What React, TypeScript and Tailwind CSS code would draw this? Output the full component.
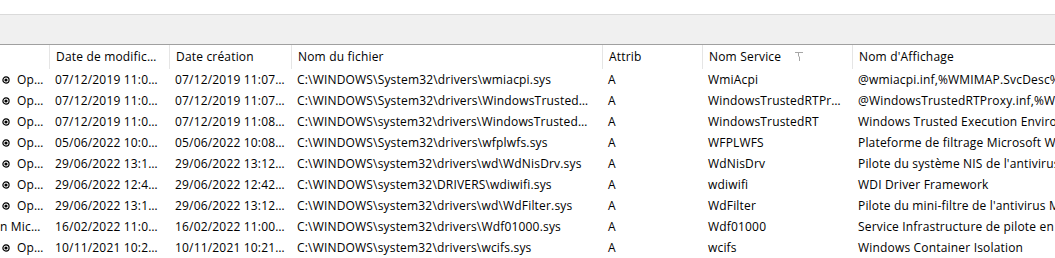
import React from "react";

type Row = {
  icon: boolean;
  first: string;
  modified: string;
  created: string;
  file: string;
  attrib: string;
  service: string;
  display: string;
};

const rows: Row[] = [
  { icon: true, first: "Op…", modified: "07/12/2019 11:0…", created: "07/12/2019 11:07…", file: "C:\\WINDOWS\\System32\\drivers\\wmiacpi.sys", attrib: "A", service: "WmiAcpi", display: "@wmiacpi.inf,%WMIMAP.SvcDesc%;Microsoft Windows Management Interface for ACPI" },
  { icon: true, first: "Op…", modified: "07/12/2019 11:0…", created: "07/12/2019 11:07…", file: "C:\\WINDOWS\\System32\\drivers\\WindowsTrusted…", attrib: "A", service: "WindowsTrustedRTPr…", display: "@WindowsTrustedRTProxy.inf,%WindowsTrustedRTProxy.SvcDesc%" },
  { icon: true, first: "Op…", modified: "07/12/2019 11:0…", created: "07/12/2019 11:08…", file: "C:\\WINDOWS\\system32\\drivers\\WindowsTrusted…", attrib: "A", service: "WindowsTrustedRT", display: "Windows Trusted Execution Environment Class Extension" },
  { icon: true, first: "Op…", modified: "05/06/2022 10:0…", created: "05/06/2022 10:08…", file: "C:\\WINDOWS\\System32\\drivers\\wfplwfs.sys", attrib: "A", service: "WFPLWFS", display: "Plateforme de filtrage Microsoft Windows" },
  { icon: true, first: "Op…", modified: "29/06/2022 13:1…", created: "29/06/2022 13:12…", file: "C:\\WINDOWS\\system32\\drivers\\wd\\WdNisDrv.sys", attrib: "A", service: "WdNisDrv", display: "Pilote du système NIS de l'antivirus Microsoft Defender" },
  { icon: true, first: "Op…", modified: "29/06/2022 12:4…", created: "29/06/2022 12:42…", file: "C:\\WINDOWS\\system32\\DRIVERS\\wdiwifi.sys", attrib: "A", service: "wdiwifi", display: "WDI Driver Framework" },
  { icon: true, first: "Op…", modified: "29/06/2022 13:1…", created: "29/06/2022 13:12…", file: "C:\\WINDOWS\\system32\\drivers\\wd\\WdFilter.sys", attrib: "A", service: "WdFilter", display: "Pilote du mini-filtre de l'antivirus Microsoft Defender" },
  { icon: false, first: "n Mic…", modified: "16/02/2022 11:0…", created: "16/02/2022 11:00…", file: "C:\\WINDOWS\\system32\\drivers\\Wdf01000.sys", attrib: "A", service: "Wdf01000", display: "Service Infrastructure de pilote en mode noyau" },
  { icon: true, first: "Op…", modified: "10/11/2021 10:2…", created: "10/11/2021 10:21…", file: "C:\\WINDOWS\\system32\\drivers\\wcifs.sys", attrib: "A", service: "wcifs", display: "Windows Container Isolation" },
];

const cols = "grid grid-cols-[49px_120px_122px_311px_100px_150px_1fr]";

function StatusIcon() {
  return (
    <svg width="8" height="8" viewBox="0 0 8 8" className="shrink-0">
      <circle cx="4" cy="4" r="3.1" fill="none" stroke="#000" strokeWidth="1.2" />
      <circle cx="4" cy="4" r="1.6" fill="#000" />
    </svg>
  );
}

function SortIcon() {
  return (
    <svg width="9" height="10" viewBox="0 0 9 10" className="ml-[14px]">
      <path d="M0 0.5H8M3.5 1V4L4.5 5V9" fill="none" stroke="#a6a6a6" strokeWidth="1" />
    </svg>
  );
}

function HeaderCell({ label, sort }: { label: string; sort?: boolean }) {
  return (
    <div className="flex items-center border-l border-[#e5e5e5] pl-[6px] pr-1 whitespace-nowrap overflow-hidden">
      {label}
      {sort && <SortIcon />}
    </div>
  );
}

export default function App() {
  return (
    <div
      className="w-[1055px] h-[258px] overflow-hidden bg-white text-[12px] tracking-[0.18px] text-black"
      style={{ fontFamily: "'Segoe UI', 'Open Sans', 'Noto Sans', sans-serif" }}
    >
      <div className="h-[14px] bg-white" />
      <div className="h-[31px] bg-[#f0f0f0] border-t border-[#dadada] border-b border-b-[#a0a0a0]" />

      <div className={`${cols} h-[24px]`}>
        <div />
        <HeaderCell label="Date de modific…" />
        <HeaderCell label="Date création" />
        <HeaderCell label="Nom du fichier" />
        <HeaderCell label="Attrib" />
        <HeaderCell label="Nom Service" sort />
        <HeaderCell label="Nom d'Affichage" />
      </div>

      {rows.map((r, i) => (
        <div key={i} className={`${cols} h-[21px] items-center whitespace-nowrap`}>
          <div className="flex items-center gap-[7px] overflow-hidden pl-[2px]">
            {r.icon ? (
              <>
                <StatusIcon />
                <span>{r.first}</span>
              </>
            ) : (
              <span className="-ml-[2px]">{r.first}</span>
            )}
          </div>
          <div className="pl-[6px] truncate">{r.modified}</div>
          <div className="pl-[6px] truncate">{r.created}</div>
          <div className="pl-[6px] truncate">{r.file}</div>
          <div className="pl-[6px] truncate">{r.attrib}</div>
          <div className="pl-[6px] truncate">{r.service}</div>
          <div className="pl-[6px] overflow-hidden">{r.display}</div>
        </div>
      ))}
    </div>
  );
}
